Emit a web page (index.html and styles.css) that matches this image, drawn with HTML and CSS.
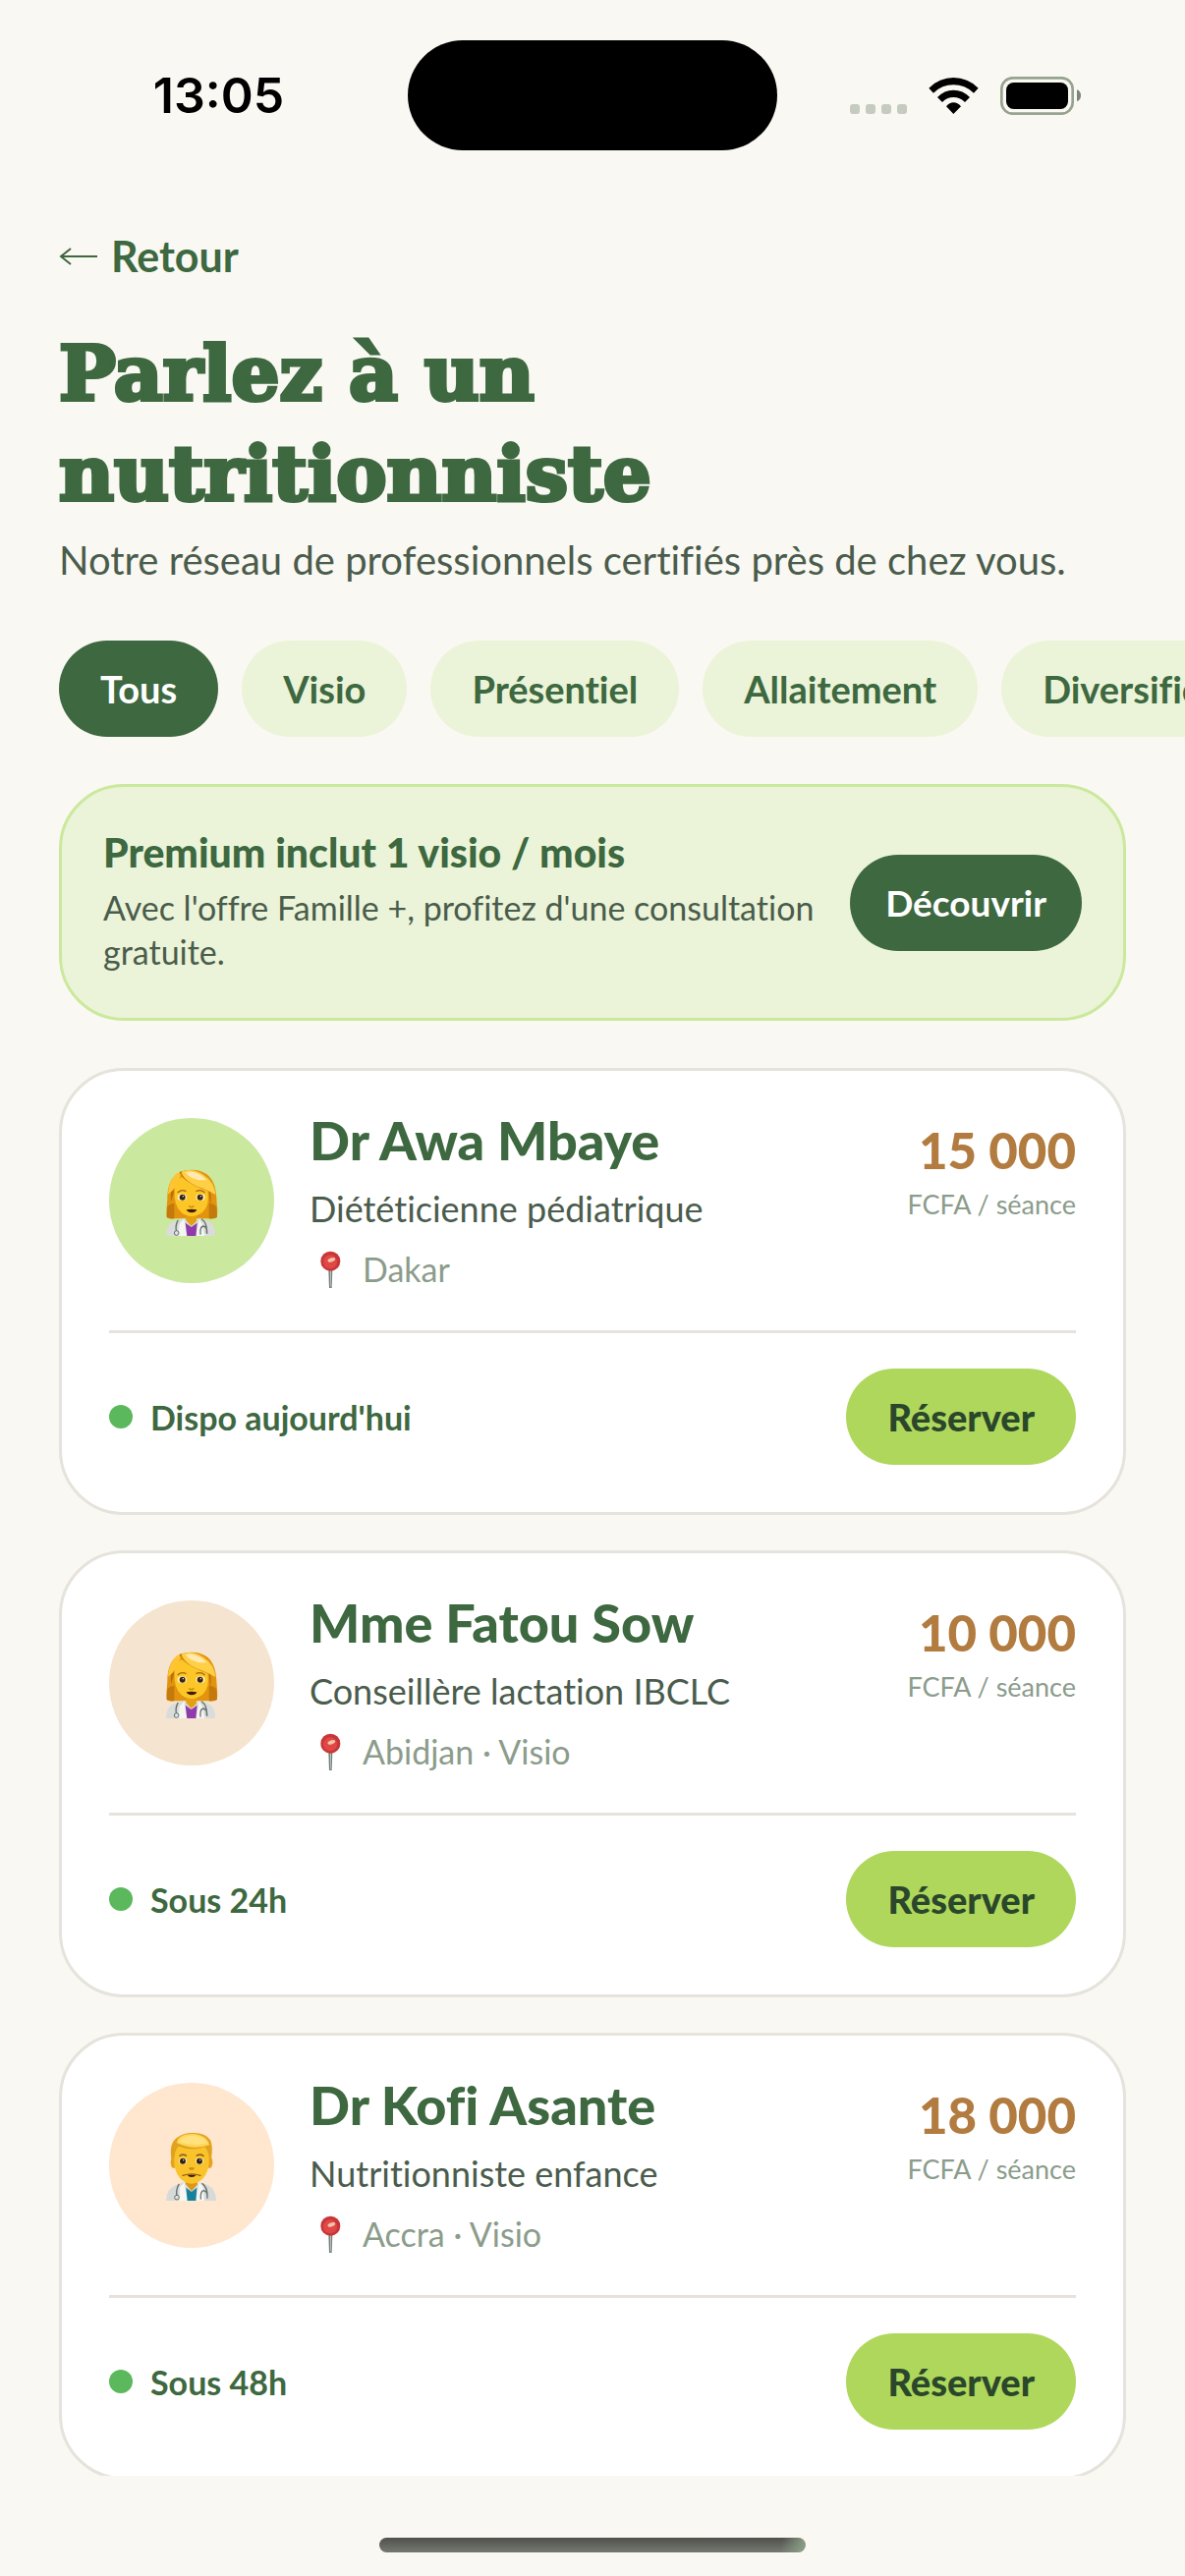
FILE: index.html
```html
<!DOCTYPE html>
<html lang="fr">
<head>
  <meta charset="UTF-8">
  <meta name="viewport" content="width=device-width, initial-scale=1.0">
  <title>Parlez à un nutritionniste</title>
  <link rel="stylesheet" href="styles.css">
</head>
<body>

  <!-- Dessins partagés -->
  <svg class="sprite" aria-hidden="true">
    <symbol id="doctor-woman" viewBox="201 192 168 228">
      <path d="M210 358C206 345 210 322 211 300C212 245 232 213 285 212C337 213 359 245 361 298C362 322 366 342 362 356Q355 362 340 361H228Q214 362 210 358Z" fill="#e2940f"/>
      <path d="M211 325Q222 312 232 316V361Q214 362 209 357ZM361 325Q349 312 338 316V361Q358 362 363 356Z" fill="#c4790c"/>
      <path d="M268 345H300V372L284 392L268 372Z" fill="#e59f13"/>
      <path d="M207 414Q207 376 234 369L262 360L284 384L310 360L335 369Q358 378 357 414Z" fill="#d9dcda"/>
      <path d="M262 361L270 414H244L248 378ZM308 361L299 414H325L318 378Z" fill="#f5f5f2"/>
      <path d="M266 374L284 387L302 374L298 414H271Z" fill="#8f3bab"/>
      <path d="M233 275Q234 249 254 234Q284 258 334 276Q342 320 318 342Q286 366 254 343Q230 320 233 275Z" fill="#fcc627"/>
      <path d="M230 285Q228 240 253 222Q258 250 338 278L342 320Q352 255 310 230Q280 214 252 217Q217 245 222 310Z" fill="#b86f0c"/>
      <path d="M253 218Q286 204 322 228Q355 250 358 288Q340 278 315 268Q263 249 253 218Z" fill="#ffcf45"/>
      <path d="M266 219Q300 211 331 243Q310 248 285 236Q272 230 266 219Z" fill="#ffe9ae"/>
      <path d="M248 218Q216 234 213 287Q242 266 251 230Z" fill="#ffc431"/>
      <ellipse cx="256" cy="296" rx="14" ry="10" fill="#fff3c9"/>
      <ellipse cx="312" cy="296" rx="14" ry="10" fill="#fff3c9"/>
      <circle cx="257" cy="296" r="9" fill="#3b2411"/>
      <circle cx="311" cy="296" r="9" fill="#3b2411"/>
      <circle cx="259" cy="293" r="2" fill="#fff"/>
      <circle cx="313" cy="293" r="2" fill="#fff"/>
      <path d="M243 281Q254 271 267 277M300 277Q313 271 325 281" fill="none" stroke="#a86510" stroke-width="4" stroke-linecap="round"/>
      <path d="M278 323Q284 329 291 323" fill="none" stroke="#cd850f" stroke-width="4" stroke-linecap="round"/>
      <path d="M269 334Q284 331 301 334Q298 343 285 343Q272 342 269 334Z" fill="#3f1c0a"/>
      <path d="M243 367Q234 384 239 400M316 363Q333 374 331 404M312 408Q310 386 321 384Q334 388 332 406" fill="none" stroke="#66706d" stroke-width="4" stroke-linecap="round"/>
      <circle cx="239" cy="405" r="7" fill="#dfe2e1" stroke="#66706d" stroke-width="3"/>
    </symbol>
    <symbol id="doctor-man" viewBox="201 198 168 228">
      <path d="M266 350H303V380L285 398L266 380Z" fill="#dd9713"/>
      <path d="M207 420Q209 383 236 373L262 363L285 391L309 363L335 373Q359 385 360 420Z" fill="#d6dad8"/>
      <path d="M263 364L272 420H247L249 378ZM308 364L298 420H324L320 378Z" fill="#f6f6f3"/>
      <path d="M268 380L285 393L301 380L298 420H272Z" fill="#16819c"/>
      <ellipse cx="230" cy="303" rx="9" ry="18" fill="#e6a318"/>
      <ellipse cx="340" cy="303" rx="9" ry="18" fill="#e6a318"/>
      <path d="M232 270Q236 236 285 235Q333 236 338 270V308Q333 349 304 364Q285 372 266 364Q237 349 232 308Z" fill="#f9c42b"/>
      <path d="M223 292Q216 244 240 228Q262 211 292 213Q329 214 342 235Q351 251 345 292L337 286Q337 270 326 256Q286 270 245 254Q234 266 233 287Z" fill="#e2a21c"/>
      <path d="M239 243Q246 216 287 216Q332 218 339 250Q290 267 239 243Z" fill="#ffd65b"/>
      <path d="M245 239Q256 222 286 221Q325 223 333 243Q292 256 245 239Z" fill="#ffe17e"/>
      <path d="M249 283Q258 276 268 282M301 282Q311 276 321 283" fill="none" stroke="#9a6212" stroke-width="5" stroke-linecap="round"/>
      <ellipse cx="258" cy="299" rx="12" ry="10" fill="#fff1c0"/>
      <ellipse cx="309" cy="299" rx="12" ry="10" fill="#fff1c0"/>
      <circle cx="258" cy="299" r="9" fill="#32200f"/>
      <circle cx="309" cy="299" r="9" fill="#32200f"/>
      <circle cx="260" cy="296" r="2" fill="#fff"/>
      <circle cx="311" cy="296" r="2" fill="#fff"/>
      <path d="M275 320Q285 333 295 320Q285 316 275 320Z" fill="#cf8c12"/>
      <path d="M258 343Q285 334 312 343" fill="none" stroke="#9a5b10" stroke-width="4" stroke-linecap="round"/>
      <path d="M272 341H299Q294 348 285 348Q276 348 272 341Z" fill="#35190a"/>
      <path d="M246 370Q236 388 240 405M318 368Q334 379 333 410M313 414Q311 391 322 389Q335 392 333 412" fill="none" stroke="#66706d" stroke-width="4" stroke-linecap="round"/>
      <circle cx="240" cy="410" r="7" fill="#dfe2e1" stroke="#66706d" stroke-width="3"/>
    </symbol>
    <symbol id="pin" viewBox="646 455 120 120">
      <path d="M704 516H716L714 572H706Z" fill="#75817a"/>
      <path d="M709 518H712L711 568H709Z" fill="#c4ccc6"/>
      <circle cx="710" cy="490" r="30" fill="#c9363a"/>
      <circle cx="709" cy="492" r="21" fill="#df4847"/>
      <ellipse cx="713" cy="486" rx="12" ry="6" fill="#f4c4a4" transform="rotate(-20 713 486)"/>
    </symbol>
  </svg>

  <!-- Barre d'état -->
  <div class="status-bar">
    <div class="status-time">13:05</div>
    <div class="island"></div>
    <div class="status-icons">
      <svg width="235" height="39" viewBox="135 84 705 117" aria-hidden="true">
        <g fill="#c5ccbf">
          <rect x="135" y="168" width="30" height="30" rx="9"/>
          <rect x="183" y="168" width="30" height="30" rx="9"/>
          <rect x="231" y="168" width="30" height="30" rx="9"/>
          <rect x="279" y="168" width="30" height="30" rx="9"/>
        </g>
        <path d="M376 119Q408 87 451 87Q495 87 527 119L513 134Q486 109 451 109Q416 109 390 134Z"/>
        <path d="M402 147Q423 125 451 125Q480 125 501 147L486 162Q471 147 451 147Q431 147 417 162Z"/>
        <path d="M429 175Q439 163 451 163Q464 163 474 175L451 198Z"/>
        <rect x="598" y="88" width="217" height="109" rx="34" fill="none" stroke="#96a391" stroke-width="8"/>
        <rect x="612" y="102" width="189" height="81" rx="23"/>
        <path d="M828 124Q840 128 840 142Q840 155 828 160Z" fill="#7d857b"/>
      </svg>
    </div>
  </div>

  <main class="screen">
    <a href="#" class="back">
      <svg width="39" height="18" viewBox="0 0 39 18" aria-hidden="true"><path d="M12 1L2 9L12 17M2 9H39" fill="none" stroke="currentColor" stroke-width="2"/></svg>
      Retour
    </a>
    <h1>Parlez à un<br>nutritionniste</h1>
    <p class="subtitle">Notre réseau de professionnels certifiés près de chez vous.</p>

    <div class="chips">
      <button class="chip active">Tous</button>
      <button class="chip">Visio</button>
      <button class="chip">Présentiel</button>
      <button class="chip">Allaitement</button>
      <button class="chip">Diversification</button>
    </div>

    <section class="banner">
      <div class="banner-text">
        <h2>Premium inclut 1 visio / mois</h2>
        <p>Avec l'offre Famille +, profitez d'une consultation gratuite.</p>
      </div>
      <button class="btn btn-dark">Découvrir</button>
    </section>

    <div class="cards">
      <article class="card">
        <div class="card-top">
          <div class="avatar avatar-green"><svg width="56" height="76"><use href="#doctor-woman"/></svg></div>
          <div class="info">
            <h3>Dr Awa Mbaye</h3>
            <p class="role">Diététicienne pédiatrique</p>
            <p class="place"><svg width="40" height="40"><use href="#pin"/></svg>Dakar</p>
          </div>
          <div class="price">
            <strong>15&nbsp;000</strong>
            <span>FCFA / séance</span>
          </div>
        </div>
        <div class="card-bottom">
          <span class="dispo">Dispo aujourd'hui</span>
          <button class="btn btn-lime">Réserver</button>
        </div>
      </article>

      <article class="card">
        <div class="card-top">
          <div class="avatar avatar-sand"><svg width="56" height="76"><use href="#doctor-woman"/></svg></div>
          <div class="info">
            <h3>Mme Fatou Sow</h3>
            <p class="role">Conseillère lactation IBCLC</p>
            <p class="place"><svg width="40" height="40"><use href="#pin"/></svg>Abidjan · Visio</p>
          </div>
          <div class="price">
            <strong>10&nbsp;000</strong>
            <span>FCFA / séance</span>
          </div>
        </div>
        <div class="card-bottom">
          <span class="dispo">Sous 24h</span>
          <button class="btn btn-lime">Réserver</button>
        </div>
      </article>

      <article class="card">
        <div class="card-top">
          <div class="avatar avatar-peach"><svg width="56" height="76"><use href="#doctor-man"/></svg></div>
          <div class="info">
            <h3>Dr Kofi Asante</h3>
            <p class="role">Nutritionniste enfance</p>
            <p class="place"><svg width="40" height="40"><use href="#pin"/></svg>Accra · Visio</p>
          </div>
          <div class="price">
            <strong>18&nbsp;000</strong>
            <span>FCFA / séance</span>
          </div>
        </div>
        <div class="card-bottom">
          <span class="dispo">Sous 48h</span>
          <button class="btn btn-lime">Réserver</button>
        </div>
      </article>
    </div>
  </main>

  <div class="home-area"><div class="home-bar"></div></div>

</body>
</html>
```
FILE: styles.css
```css
* {
  box-sizing: border-box;
  margin: 0;
  padding: 0;
}
body {
  background: #faf8f2;
  color: #3d6840;
  font-family: Lato, "Noto Sans", sans-serif;
  font-variant-ligatures: no-common-ligatures;
  height: 100vh;
  display: flex;
  flex-direction: column;
  overflow: hidden;
}
svg { display: block; flex: none; }
button { border: none; font-family: inherit; font-variant-ligatures: inherit; cursor: pointer; white-space: nowrap; }
.sprite { position: absolute; width: 0; height: 0; }

/* Barre d'état */
.status-bar { flex: none; height: 194px; display: grid; grid-template-columns: 1fr 376px 1fr; align-items: center; color: #000; }
.status-time { font: 600 50px/60px Inter, sans-serif; text-align: center; padding-left: 30px; }
.island { height: 112px; border-radius: 56px; background: #000; }
.status-icons { display: flex; justify-content: center; padding-right: 32px; }

/* Contenu */
.screen { flex: 1; min-height: 0; overflow: hidden; padding: 37px 60px 0; }
.back { display: flex; align-items: center; gap: 14px; width: max-content; color: #3d6840; font-size: 43px; font-weight: 700; line-height: 60px; text-decoration: none; }
h1 { margin-top: 38px; font-family: "DejaVu Serif", serif; font-size: 77px; font-weight: 700; line-height: 102px; -webkit-text-stroke: 4px #3d6840; }
.subtitle { margin-top: 10px; color: #4a5c4c; font-size: 40px; line-height: 54px; }

.chips { display: flex; gap: 24px; margin: 55px -60px 0 0; overflow: hidden; }
.chip { flex: none; height: 98px; padding: 0 42px; border-radius: 49px; background: #ebf4d8; color: #3d6840; font-size: 38px; font-weight: 700; }
.chip.active { background: #3d6840; color: #fff; }

.btn { flex: none; height: 98px; border-radius: 49px; }
.btn-dark { padding: 0 36px; background: #3d6840; color: #fff; font-size: 37px; font-weight: 700; }
.btn-lime { padding: 0 42px; background: #afd75c; color: #2a472b; font-size: 38px; font-weight: 900; }

.banner { display: flex; align-items: center; gap: 24px; margin-top: 48px; padding: 45px 42px; border: 3px solid #cbe99d; border-radius: 66px; background: #ebf4d8; }
.banner-text { flex: 1; }
.banner h2 { font-size: 41px; font-weight: 900; line-height: 43px; margin-bottom: 12px; }
.banner p { color: #4a5c4c; font-size: 34px; line-height: 45px; }

/* Cartes */
.cards { display: flex; flex-direction: column; gap: 36px; margin-top: 48px; }
.card { padding: 48px; background: #fff; border: 3px solid #e5e3db; border-radius: 66px; }
.card-top { display: flex; align-items: flex-start; gap: 36px; padding-bottom: 42px; border-bottom: 3px solid #e5e3db; }
.avatar { flex: none; width: 168px; height: 168px; border-radius: 50%; display: flex; align-items: center; justify-content: center; }
.avatar-green { background: #cae89e; }
.avatar-sand { background: #f5e4cf; }
.avatar-peach { background: #fee6cf; }
.info { flex: 1; }
.info h3 { font-size: 54px; font-weight: 900; line-height: 46px; }
.role { margin-top: 22px; color: #4a5c4c; font-size: 36px; line-height: 48px; }
.place { display: flex; align-items: center; gap: 14px; margin-top: 18px; color: #8b9c8b; font-size: 34px; line-height: 40px; }
.price { text-align: right; }
.price strong { display: block; color: #b27b3f; font-size: 51px; font-weight: 900; line-height: 66px; }
.price span { display: block; margin-top: 4px; color: #8b9c8b; font-size: 27px; line-height: 36px; }
.card-bottom { display: flex; align-items: center; justify-content: space-between; padding-top: 36px; }
.dispo { display: flex; align-items: center; gap: 18px; font-size: 34px; font-weight: 700; }
.dispo::before { content: ""; width: 24px; height: 24px; border-radius: 50%; background: #5cb85c; }

.home-area { flex: none; height: 102px; padding-top: 63px; }
.home-bar { width: 36%; height: 15px; margin: 0 auto; border-radius: 8px; background: linear-gradient(100deg, transparent 94%, #8fa38b), linear-gradient(#50504c, #747a70); }
```
